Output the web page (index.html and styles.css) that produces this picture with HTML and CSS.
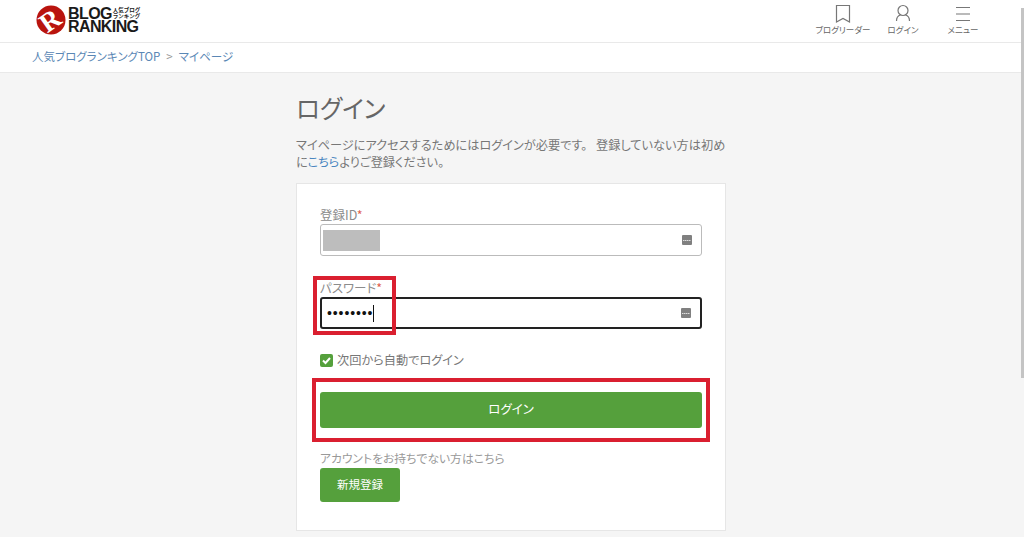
FILE: index.html
```html
<!DOCTYPE html>
<html lang="ja">
<head>
    <meta charset="UTF-8">
    <meta name="viewport" content="width=device-width, initial-scale=1.0">
    <title>ログイン</title>
    <link rel="stylesheet" href="styles.css">
</head>
<body>
<!-- Header -->
<header class="site-header">
    <a class="logo" href="#">
        <svg class="logo-mark" width="30" height="30" viewBox="0 0 30 30">
            <circle cx="15" cy="15" r="14.5" fill="#b9140e"/>
            <text class="logo-r" x="14" y="24" text-anchor="middle" transform="rotate(-35 15 15)">R</text>
        </svg>
        <div class="logo-text">
            <div class="logo-line"><span class="logo-word">BLOG</span><span class="logo-small">人気ブログ<br>ランキング</span></div>
            <div class="logo-word">RANKING</div>
        </div>
    </a>
    <nav class="header-nav">
        <a class="nav-item" href="#">
            <svg width="18" height="20" viewBox="0 0 18 20" fill="none" stroke="#777" stroke-width="1.2"><path d="M2.500 1.500h13v16.500L9 14.500l-6.500 3.500z"/></svg>
            <span>ブログリーダー</span>
        </a>
        <a class="nav-item" href="#">
            <svg width="18" height="20" viewBox="0 0 18 20" fill="none" stroke="#777" stroke-width="1.2"><circle cx="9" cy="6.500" r="5"/><path d="M2.500 17c0-3.500 2-5.500 4-6M15.500 17c0-3.500-2-5.500-4-6"/></svg>
            <span>ログイン</span>
        </a>
        <a class="nav-item" href="#">
            <svg width="18" height="20" viewBox="0 0 18 20" fill="none" stroke="#777" stroke-width="1.2"><path d="M2 3.500h14M2 10h14M2 16.500h14"/></svg>
            <span>メニュー</span>
        </a>
    </nav>
</header>

<div class="breadcrumb">
    <a href="#">人気ブログランキングTOP</a>
    <span class="sep">&gt;</span>
    <a href="#">マイページ</a>
</div>

<!-- Login -->
<main class="content">
    <h1>ログイン</h1>
    <p class="lead">マイページにアクセスするためにはログインが必要です。 登録していない方は初めに<a href="#">こちら</a>よりご登録ください。</p>

    <form class="card">
        <label class="field-label">登録ID<span class="req">*</span></label>
        <div class="input-box">
            <span class="masked"></span>
            <svg class="key-icon" width="10" height="10" viewBox="0 0 10 10"><rect width="10" height="10" rx="1" fill="#808080"/><path d="M1 5.500h8" stroke="#ddd" stroke-width="1.200" stroke-dasharray="1.500 .5"/></svg>
        </div>

        <label class="field-label second">パスワード<span class="req">*</span></label>
        <div class="input-box focused">
            <span class="dots">••••••••</span><span class="caret"></span>
            <svg class="key-icon" width="10" height="10" viewBox="0 0 10 10"><rect width="10" height="10" rx="1" fill="#808080"/><path d="M1 5.500h8" stroke="#ddd" stroke-width="1.200" stroke-dasharray="1.500 .5"/></svg>
        </div>

        <div class="remember">
            <span class="checkbox">
                <svg width="13" height="13" viewBox="0 0 13 13" fill="none" stroke="#fff" stroke-width="2"><path d="M3 6.500l2.500 2.500 4.500-5"/></svg>
            </span>
            <span class="remember-text">次回から自動でログイン</span>
        </div>

        <button class="btn btn-login" type="button">ログイン</button>

        <p class="signup-note">アカウントをお持ちでない方はこちら</p>
        <button class="btn btn-signup" type="button">新規登録</button>

        <!-- red annotation boxes -->
        <div class="mark mark-password"></div>
        <div class="mark mark-login"></div>
    </form>
</main>

<div class="scroll-thumb"></div>
</body>
</html>
```

FILE: styles.css
```css
* {
    box-sizing: border-box;
}

html, body {
    height: 537px;
    overflow: hidden;
}

body {
    margin: 0;
    background-color: #f5f5f5;
    color: #777;
    font-family: "Noto Sans CJK JP", "Noto Sans", sans-serif;
    font-size: 12px;
}

a {
    color: inherit;
    text-decoration: none;
}

/* Header */
.site-header {
    display: flex;
    justify-content: space-between;
    height: 43px;
    padding: 0 31px 0 36px;
    background-color: #fff;
    border-bottom: 1px solid #e9e9e9;
}

.logo {
    display: flex;
    align-items: flex-start;
    gap: 2px;
    padding-top: 5px;
}

.logo-r {
    fill: #fff;
    font-family: "Liberation Serif", serif;
    font-weight: bold;
    font-size: 27px;
}

.logo-text {
    padding-top: 2px;
    color: #1a1a1a;
    font-family: "Liberation Sans", sans-serif;
    font-weight: bold;
}

.logo-line {
    display: flex;
    align-items: center;
    gap: 1px;
    height: 13px;
}

.logo-word {
    font-size: 16px;
    line-height: 14px;
    letter-spacing: -0.600px;
}

.logo-small {
    font-family: "Noto Sans CJK JP", sans-serif;
    font-size: 5.500px;
    line-height: 5.500px;
    letter-spacing: 0;
    white-space: nowrap;
}

.header-nav {
    display: flex;
}

.nav-item {
    display: flex;
    flex-direction: column;
    align-items: center;
    width: 60px;
    padding-top: 4px;
    color: #666;
    font-size: 8.500px;
    line-height: 11px;
    white-space: nowrap;
    font-feature-settings: "palt";
}

.nav-item svg {
    display: block;
}

.breadcrumb {
    display: flex;
    align-items: center;
    gap: 6px;
    height: 30px;
    padding: 0 0 3px 32px;
    background-color: #fff;
    border-bottom: 1px solid #e9e9e9;
    color: #5a87b5;
    font-size: 11.500px;
    font-feature-settings: "palt";
}

.breadcrumb .sep {
    color: #999;
}

/* Login */
.content {
    width: 430px;
    margin-left: 296px;
}

h1 {
    margin: 19px 0 0;
    color: #666;
    font-size: 24.500px;
    font-weight: 400;
    line-height: 32px;
    font-feature-settings: "palt";
}

.lead {
    margin: 13px 0 0;
    font-size: 12.200px;
    line-height: 17px;
    word-spacing: 6px;
    font-feature-settings: "palt";
}

.lead a {
    color: #4a86c0;
}

.card {
    position: relative;
    height: 348px;
    margin-top: 12px;
    padding: 23px 23px 0;
    background-color: #fff;
    border: 1px solid #e6e6e6;
}

.field-label {
    display: block;
    height: 17px;
    color: #8c8c8c;
    font-size: 12.500px;
    line-height: 15px;
    font-feature-settings: "palt";
}

.field-label.second {
    margin-top: 24px;
}

.req {
    color: #e0604c;
}

.input-box {
    display: flex;
    align-items: center;
    width: 382px;
    height: 32px;
    padding-left: 2px;
    border: 1px solid #bbb;
    border-radius: 3px;
    background-color: #fff;
}

.input-box.focused {
    border: 2px solid #222;
}

.masked {
    width: 57px;
    height: 21px;
    background-color: #bdbdbd;
}

.dots {
    padding-left: 3px;
    color: #111;
    font-family: "Liberation Sans", sans-serif;
    font-size: 14px;
    letter-spacing: 0.900px;
}

.caret {
    width: 1px;
    height: 17px;
    background-color: #111;
}

.key-icon {
    margin-left: auto;
    margin-right: 9px;
}

.remember {
    display: flex;
    align-items: center;
    gap: 4px;
    height: 14px;
    margin-top: 24px;
}

.remember-text {
    color: #777;
    font-size: 12.200px;
    font-feature-settings: "palt";
}

.checkbox {
    width: 13px;
    height: 13px;
    background-color: #55a03c;
    border-radius: 2px;
}

.checkbox svg {
    display: block;
}

.btn {
    display: block;
    padding: 0 0 3px;
    border: none;
    border-radius: 3px;
    background-color: #55a03c;
    color: #fff;
    font-family: inherit;
    font-size: 12.500px;
    font-feature-settings: "palt";
}

.btn-login {
    width: 382px;
    height: 36px;
    margin-top: 25px;
}

.signup-note {
    height: 17px;
    margin: 23px 0 0;
    color: #999;
    font-size: 11.800px;
    line-height: 13px;
    font-feature-settings: "palt";
}

.btn-signup {
    width: 80px;
    height: 34px;
    font-size: 11.500px;
}

/* annotation boxes drawn over the form */
.mark {
    position: absolute;
    border: 4px solid #da1f30;
}

.mark-password {
    left: 16px;
    top: 92px;
    width: 83px;
    height: 59px;
}

.mark-login {
    left: 15px;
    top: 194px;
    width: 398px;
    height: 64px;
}

.scroll-thumb {
    position: fixed;
    top: 8px;
    right: 0;
    width: 3px;
    height: 370px;
    background-color: #c4c4c4;
}
```
